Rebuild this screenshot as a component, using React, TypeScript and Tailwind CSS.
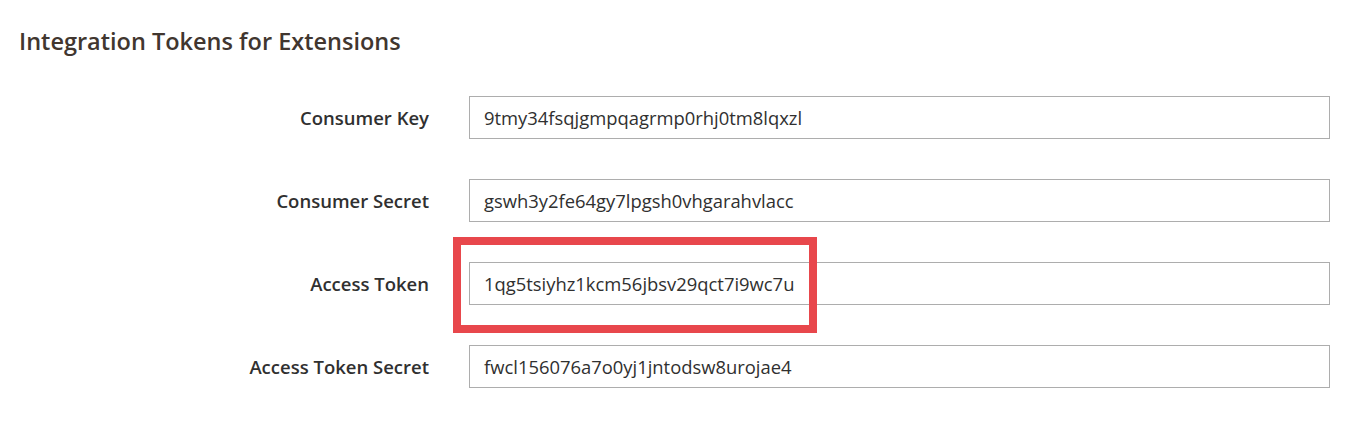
import React from "react";

const rows = [
  { label: "Consumer Key", value: "9tmy34fsqjgmpqagrmp0rhj0tm8lqxzl" },
  { label: "Consumer Secret", value: "gswh3y2fe64gy7lpgsh0vhgarahvlacc" },
  { label: "Access Token", value: "1qg5tsiyhz1kcm56jbsv29qct7i9wc7u" },
  { label: "Access Token Secret", value: "fwcl156076a7o0yj1jntodsw8urojae4" },
];

export default function App() {
  return (
    <div
      className="relative w-[1362px] h-[424px] bg-white overflow-hidden"
      style={{ fontFamily: '"Open Sans", sans-serif' }}
    >
      <h2 className="pl-[19px] pt-[26px] text-[23.5px] leading-[30px] font-semibold text-[#41362f]">
        Integration Tokens for Extensions
      </h2>
      <div className="mt-[40px] flex flex-col gap-[40px]">
        {rows.map((r) => (
          <div key={r.label} className="flex items-center">
            <div className="w-[429px] text-right text-[18.5px] font-semibold text-[#303030]">
              {r.label}
            </div>
            <div className="ml-[40px] w-[861px] h-[43px] border border-[#adadad] flex items-center pl-[14px] text-[18.4px] text-[#303030]">
              {r.value}
            </div>
          </div>
        ))}
      </div>
      <div className="absolute left-[453px] top-[237px] w-[364px] h-[96px] border-[8px] border-[#e8474c]" />
    </div>
  );
}
